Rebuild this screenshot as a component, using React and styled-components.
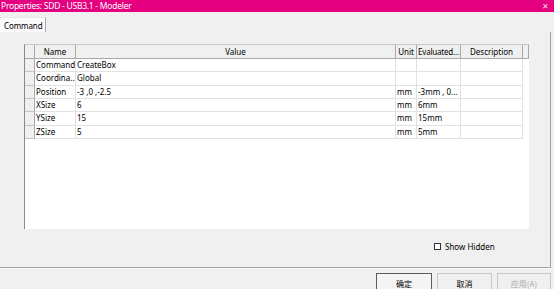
import React from 'react';
import styled, { createGlobalStyle } from 'styled-components';

const GlobalStyle = createGlobalStyle`
  html, body {
    margin: 0;
    padding: 0;
    background: #f0f0f0;
    overflow: hidden;
  }
  body {
    font-family: "Noto Sans", "Noto Sans CJK SC", sans-serif;
    font-size: 8px;
    color: #000;
  }
`;

// Ventana completa
const Window = styled.div`
  width: 554px;
  height: 289px;
  display: flex;
  flex-direction: column;
  overflow: hidden;
  background: #f0f0f0;
`;

const TitleBar = styled.div`
  height: 12px;
  flex: none;
  background: #e4007f;
  color: #fff;
  display: flex;
  align-items: center;
  justify-content: space-between;
  padding: 0 5px 0 1px;
  font-size: 8.5px;
  line-height: 12px;
  letter-spacing: -0.25px;
`;

const Close = styled.span`
  font-size: 8px;
  opacity: 0.85;
`;

const TabStrip = styled.div`
  height: 20px;
  flex: none;
  display: flex;
  align-items: flex-end;
`;

const Tab = styled.div`
  height: 15px;
  box-sizing: border-box;
  padding: 0 2px 0 4px;
  display: flex;
  align-items: center;
  background: #fafafa;
  border-right: 1px solid #a8a8a8;
  border-top: 1px solid #e8e8e8;
  letter-spacing: -0.1px;
`;

const Panel = styled.div`
  width: 551px;
  height: 236px;
  flex: none;
  box-sizing: border-box;
  border-right: 1px solid #a0a0a0;
  border-bottom: 1px solid #a0a0a0;
  box-shadow: 0 1px 0 #fafafa;
  padding: 12px 0 0 24px;
  display: flex;
  flex-direction: column;
`;

const GridBox = styled.div`
  width: 505px;
  height: 185px;
  box-sizing: border-box;
  background: #fff;
  border-left: 1px solid #8a8a8a;
  border-top: 1px solid #c8c8c8;
  display: grid;
  grid-template-columns: 10px 41px 320px 21px 44px 62px 6px;
  grid-auto-rows: 13.33px;
  grid-template-rows: 14px;
  align-content: start;
`;

const HeadCell = styled.div`
  background: #f0f0f0;
  border-right: 1px solid #a8a8a8;
  border-bottom: 1px solid #a8a8a8;
  box-sizing: border-box;
  text-align: center;
  line-height: 13px;
  white-space: nowrap;
  overflow: hidden;
  letter-spacing: ${p => (p.$tight ? '-0.2px' : '0')};
`;

const SelCell = styled.div`
  background: #f0f0f0;
  border-right: 1px solid #a8a8a8;
  border-bottom: 1px solid #c4c4c4;
  box-sizing: border-box;
`;

const Cell = styled.div`
  border-right: ${p => (p.$last ? 'none' : '1px solid #e2e2e2')};
  border-bottom: ${p => (p.$last ? 'none' : '1px solid #e2e2e2')};
  box-sizing: border-box;
  line-height: 12.5px;
  padding-left: 1px;
  white-space: nowrap;
  overflow: hidden;
`;

const CheckRow = styled.div`
  display: flex;
  align-items: center;
  gap: 4px;
  margin: 12px 0 0 410px;
  height: 10px;
`;

const Box = styled.span`
  width: 7px;
  height: 7px;
  box-sizing: border-box;
  border: 1px solid #333;
  background: #fff;
`;

const Footer = styled.div`
  display: flex;
  gap: 5px;
  padding: 5px 0 0 376px;
`;

const Button = styled.div`
  width: ${p => p.$w}px;
  height: 20px;
  box-sizing: border-box;
  border: 1px solid ${p => (p.$default ? '#5a5a5a' : '#c8c8c8')};
  background: ${p => (p.$default ? '#f4f4f4' : '#f0f0f0')};
  color: ${p => (p.$disabled ? '#a8a8a8' : '#000')};
  display: flex;
  justify-content: center;
  padding-top: 4px;
  font-family: "Noto Sans CJK SC", sans-serif;
  font-size: 8px;
`;

const columns = ['Name', 'Value', 'Unit', 'Evaluated...', 'Description'];

const rows = [
  ['Command', 'CreateBox', '', ''],
  ['Coordina...', 'Global', '', ''],
  ['Position', '-3 ,0 ,-2.5', 'mm', '-3mm , 0...'],
  ['XSize', '6', 'mm', '6mm'],
  ['YSize', '15', 'mm', '15mm'],
  ['ZSize', '5', 'mm', '5mm'],
];

export default function App() {
  return (
    <>
      <GlobalStyle />
      <Window>
        <TitleBar>
          <span>Properties: SDD - USB3.1 - Modeler</span>
          <Close>✕</Close>
        </TitleBar>
        <TabStrip>
          <Tab>Command</Tab>
        </TabStrip>
        <Panel>
          <GridBox>
            <HeadCell />
            {columns.map(c => (
              <HeadCell key={c} $tight={c === 'Evaluated...'}>{c}</HeadCell>
            ))}
            <HeadCell />
            {rows.map(r => (
              <React.Fragment key={r[0]}>
                <SelCell />
                <Cell>{r[0]}</Cell>
                <Cell>{r[1]}</Cell>
                <Cell>{r[2]}</Cell>
                <Cell>{r[3]}</Cell>
                <Cell />
                <Cell $last />
              </React.Fragment>
            ))}
          </GridBox>
          <CheckRow>
            <Box />
            <span>Show Hidden</span>
          </CheckRow>
        </Panel>
        <Footer>
          <Button $w={56} $default>确定</Button>
          <Button $w={55}>取消</Button>
          <Button $w={54} $disabled>应用(A)</Button>
        </Footer>
      </Window>
    </>
  );
}
